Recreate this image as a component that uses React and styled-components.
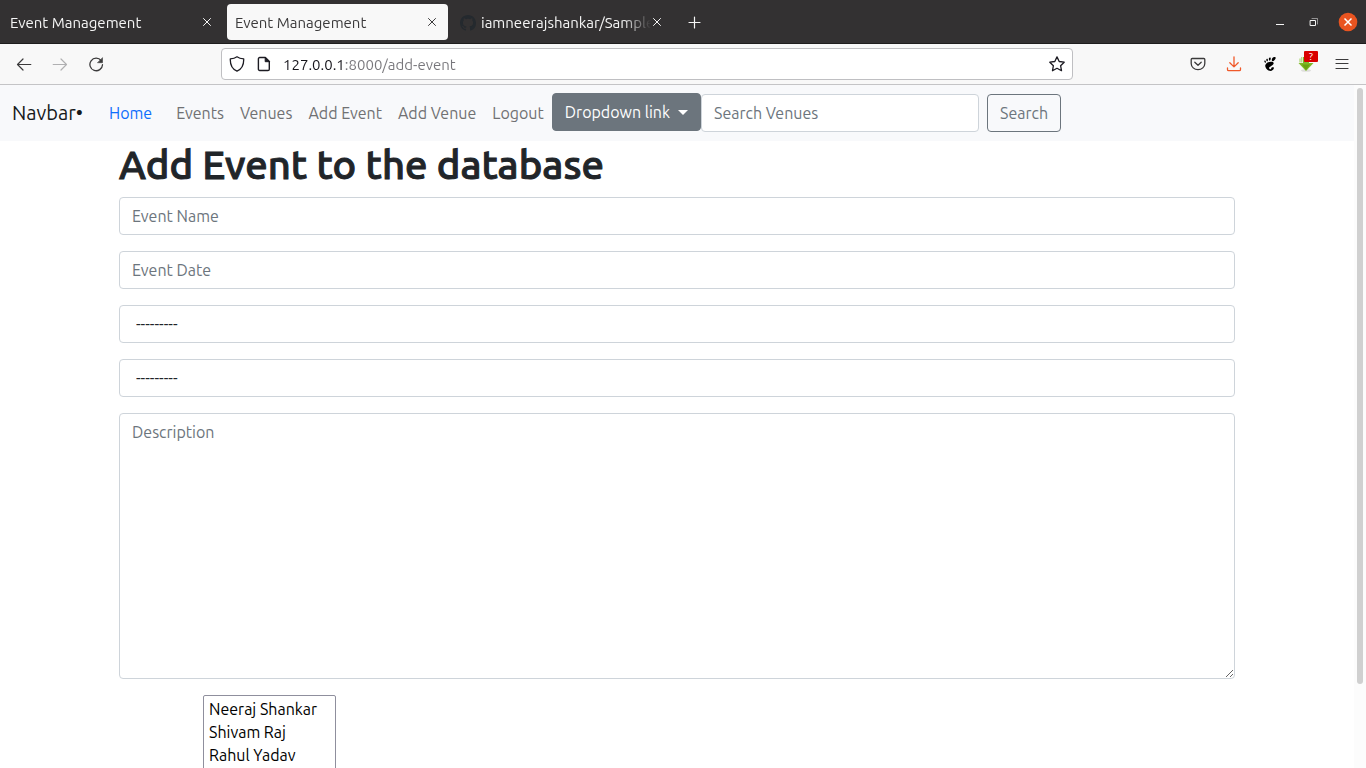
import React from "react";
import styled, { createGlobalStyle, css } from "styled-components";
import { SiGnome } from "react-icons/si";

const GlobalStyle = createGlobalStyle`
  *, *::before, *::after { box-sizing: border-box; }
  html, body { margin: 0; padding: 0; }
  body, button, input, select, textarea {
    font-family: Ubuntu, "Noto Sans", "Open Sans", sans-serif;
  }
`;

const Browser = styled.div`
  display: flex;
  flex-direction: column;
  height: 100vh;
  overflow: hidden;
  background: #fff;
`;

const TabStrip = styled.header`
  display: flex;
  align-items: center;
  flex: none;
  height: 44px;
  padding: 0 8px 0 2px;
  gap: 4px;
  background: #333132;
  border-bottom: 1px solid #1e1d1d;
`;

const Tab = styled.div`
  display: flex;
  align-items: center;
  width: 221px;
  height: 36px;
  padding: 0 10px 0 8px;
  border-radius: 4px;
  color: ${(p) => (p.$active ? "#3b3a3b" : "#f5f5f5")};
  background: ${(p) => (p.$active ? "#f8f8f8" : "transparent")};
`;

const TabTitle = styled.button`
  display: flex;
  align-items: center;
  gap: 5px;
  flex: 1;
  min-width: 0;
  height: 100%;
  padding: 2px 0 0;
  border: 0;
  background: none;
  color: inherit;
  font-size: 15px;
  white-space: nowrap;
  overflow: hidden;
  mask-image: linear-gradient(to left, transparent, #000 28px);
  svg { flex: none; }
`;

const IconButton = styled.button`
  display: flex;
  align-items: center;
  justify-content: center;
  flex: none;
  width: ${(p) => p.$size || 32}px;
  height: ${(p) => p.$size || 32}px;
  padding: 0;
  border: 0;
  background: none;
  color: ${(p) => p.$color || "inherit"};
`;

const WindowControls = styled.div`
  display: flex;
  align-items: center;
  gap: 14px;
  margin-left: auto;
  color: #f5f5f5;
`;

const Toolbar = styled.div`
  display: flex;
  align-items: center;
  flex: none;
  height: 41px;
  padding: 0 8px;
  gap: 4px;
  background: #f8f8f8;
  border-bottom: 1px solid #c4c4c6;
  color: #3b3a3b;
`;

const AddressBar = styled.div`
  display: flex;
  align-items: center;
  flex: 1;
  height: 32px;
  margin: 0 105px;
  padding: 0 7px;
  gap: 11px;
  border: 1px solid #bfbfc2;
  border-radius: 4px;
  background: #fff;
  color: #1c1b22;
`;

const AddressInput = styled.input`
  flex: 1;
  min-width: 0;
  height: 28px;
  padding: 0;
  border: 0;
  outline: 0;
  font-size: 15px;
  color: transparent;
  background: linear-gradient(to right, #15141a 61px, #77767b 61px);
  background-clip: text;
`;

const AddonIcon = styled.span`
  position: relative;
  display: flex;
`;

const AddonBadge = styled.span`
  position: absolute;
  top: -5px;
  left: 6px;
  width: 14px;
  height: 11px;
  border-radius: 1px;
  background: #d90000;
  color: #fff;
  font-size: 10px;
  line-height: 11px;
  text-align: center;
`;

const Viewport = styled.div`
  display: flex;
  flex: 1;
  min-height: 0;
`;

const Page = styled.div`
  flex: 1;
  min-width: 0;
  overflow: hidden;
`;

const ScrollTrack = styled.div`
  flex: none;
  width: 12px;
  padding: 3px;
  background: #fcfcfc;
`;

const ScrollThumb = styled.div`
  height: 88%;
  border-radius: 3px;
  background: #d0d0d0;
`;

const Navbar = styled.nav`
  display: flex;
  align-items: center;
  padding: 8px 12px;
  background: #f8f9fb;
`;

const Brand = styled.a`
  width: 81px;
  margin-right: 8px;
  color: #17191b;
  font-size: 20px;
  line-height: 30px;
  text-decoration: none;
  white-space: nowrap;
`;

const NavLinks = styled.div`
  display: flex;
  align-items: flex-start;
`;

const NavLink = styled.a`
  padding: 8px;
  margin-right: ${(p) => (p.$active ? 8 : 0)}px;
  color: ${(p) => (p.$active ? "#0d6efd" : "#707173")};
  font-size: 16px;
  line-height: 24px;
  text-decoration: none;
  white-space: nowrap;
`;

const buttonBase = css`
  height: 38px;
  padding: 0 12px;
  border: 1px solid #6c757d;
  border-radius: 4px;
  font-size: 16px;
  line-height: 24px;
  white-space: nowrap;
`;

const DropdownButton = styled.button`
  ${buttonBase}
  display: flex;
  align-items: center;
  gap: 8px;
  background: #6c757d;
  color: #fff;
`;

const Caret = styled.span`
  border: 5px solid transparent;
  border-top-color: currentColor;
  border-bottom: 0;
`;

const OutlineButton = styled.button`
  ${buttonBase}
  background: transparent;
  color: #6c757d;
`;

const SearchForm = styled.form`
  display: flex;
  gap: 8px;
`;

const fieldBase = css`
  display: block;
  width: 100%;
  border: 1px solid #ced4da;
  border-radius: 4px;
  background: #fff;
  color: #212529;
  font-size: 16px;
  line-height: 24px;
  &::placeholder { color: #6c757d; opacity: 1; }
`;

const TextField = styled.input`
  ${fieldBase}
  height: 38px;
  padding: 6px 12px;
`;

const SearchField = styled(TextField)`
  width: 278px;
`;

const SelectField = styled.select`
  ${fieldBase}
  appearance: none;
  height: 38px;
  padding: 6px 16px;
`;

const TextArea = styled.textarea`
  ${fieldBase}
  height: 266px;
  padding: 6px 12px;
  resize: vertical;
`;

const Container = styled.main`
  max-width: 1140px;
  margin: 0 auto;
  padding: 0 12px;
`;

const Heading = styled.h1`
  margin: 0 0 8px;
  color: #212529;
  font-size: 40px;
  font-weight: 500;
  line-height: 48px;
  -webkit-text-stroke: 1px #212529;
`;

const EventForm = styled.form`
  display: flex;
  flex-direction: column;
  gap: 16px;
`;

const Attendees = styled.div`
  padding-left: 84px;
`;

const AttendeeList = styled.select`
  width: 133px;
  height: 100px;
  padding: 4px 0;
  border: 1px solid #8f8f9d;
  border-radius: 2px;
  background: #fff;
  color: #000;
  font-size: 16px;
  overflow: hidden;
  option { height: 23px; padding: 0 5px; line-height: 23px; }
`;

function Svg({ size = 16, children, ...rest }) {
  return (
    <svg width={size} height={size} viewBox="0 0 16 16" fill="none" stroke="currentColor"
      strokeLinecap="round" strokeLinejoin="round" aria-hidden="true" {...rest}>
      {children}
    </svg>
  );
}

const CloseIcon = () => (
  <Svg size={12} viewBox="2 2 12 12"><path d="M4.500 4.500l7 7M11.500 4.500l-7 7" /></Svg>
);

const GithubIcon = () => (
  <svg width="16" height="16" viewBox="0 0 16 16" fill="#24292e" aria-hidden="true">
    <path d="M8 0C3.58 0 0 3.58 0 8c0 3.54 2.29 6.53 5.47 7.59.4.07.55-.17.55-.38 0-.19-.01-.82-.01-1.49-2.01.37-2.53-.49-2.69-.94-.09-.23-.48-.94-.82-1.13-.28-.15-.68-.52-.01-.53.63-.01 1.08.58 1.23.82.72 1.21 1.87.87 2.33.66.07-.52.28-.87.51-1.07-1.78-.2-3.64-.89-3.64-3.95 0-.87.31-1.59.82-2.15-.08-.2-.36-1.02.08-2.12 0 0 .67-.21 2.2.82.64-.18 1.32-.27 2-.27s1.36.09 2 .27c1.53-1.04 2.2-.82 2.2-.82.44 1.1.16 1.92.08 2.12.51.56.82 1.27.82 2.15 0 3.07-1.87 3.75-3.65 3.95.29.25.54.73.54 1.48 0 1.07-.01 1.93-.01 2.2 0 .21.15.46.55.38A8.01 8.01 0 0 0 16 8c0-4.42-3.58-8-8-8z" />
  </svg>
);

const tabs = [
  { title: "Event Management" },
  { title: "Event Management", active: true },
  { title: "iamneerajshankar/Sample", icon: <GithubIcon /> },
];

const links = ["Home", "Events", "Venues", "Add Event", "Add Venue", "Logout"];
const people = ["Neeraj Shankar", "Shivam Raj", "Rahul Yadav", ""];

function BrowserTabs() {
  return (
    <TabStrip>
      {tabs.map((tab, i) => (
        <Tab key={i} $active={tab.active}>
          <TabTitle type="button">{tab.icon}<span>{tab.title}</span></TabTitle>
          <IconButton type="button" $size={12} aria-label="Close tab"><CloseIcon /></IconButton>
        </Tab>
      ))}
      <IconButton type="button" $size={34} $color="#f5f5f5" aria-label="New tab">
        <Svg><path d="M8.500 3v11M3 8.500h11" strokeWidth="1.200" /></Svg>
      </IconButton>
      <WindowControls>
        <IconButton type="button" $size={20} aria-label="Minimize">
          <Svg><path d="M4 10.500h8" strokeLinecap="butt" /></Svg>
        </IconButton>
        <IconButton type="button" $size={20} aria-label="Restore">
          <Svg strokeLinejoin="miter">
            <path d="M4.500 6.500h5v5h-5z" />
            <path d="M6 4.500h5.500v5.500" opacity=".5" />
          </Svg>
        </IconButton>
        <IconButton type="button" $size={20} aria-label="Close window">
          <svg width="20" height="20" viewBox="0 0 20 20" aria-hidden="true">
            <circle cx="10" cy="10" r="9.300" fill="#e95420" />
            <path d="M6.500 6.500l7 7M13.500 6.500l-7 7" stroke="#fff" strokeWidth="1.500" />
          </svg>
        </IconButton>
      </WindowControls>
    </TabStrip>
  );
}

function BrowserToolbar() {
  return (
    <Toolbar>
      <IconButton type="button" aria-label="Back">
        <Svg><path d="M14.800 8.500H1.500M7 3L1.500 8.500 7 14" strokeWidth="1.200" /></Svg>
      </IconButton>
      <IconButton type="button" $color="#b0b0b2" aria-label="Forward">
        <Svg><path d="M1.200 8.500h13.300M9 3l5.500 5.500L9 14" strokeWidth="1.200" /></Svg>
      </IconButton>
      <IconButton type="button" aria-label="Reload">
        <Svg>
          <path d="M13.200 4.600A6.300 6.300 0 1 0 14.500 8.700" strokeWidth="1.300" />
          <path d="M14.500 2v4.700H9.800z" fill="currentColor" strokeWidth=".6" />
        </Svg>
      </IconButton>
      <AddressBar>
        <Svg>
          <path d="M8 .8c1.700 1.300 4.300 2 6.700 2.100.2 5-1.700 10.200-6.700 12.300C3 13.100 1.100 7.900 1.300 2.900 3.700 2.800 6.300 2.100 8 .8z" strokeWidth="1.300" />
        </Svg>
        <Svg>
          <path d="M3.700 1.500h5.600l4 4v7.700a1.300 1.300 0 0 1-1.300 1.300H3.700a1.300 1.300 0 0 1-1.300-1.300V2.800a1.300 1.300 0 0 1 1.300-1.300z" strokeWidth="1.400" />
          <path d="M9.200 1.500v4.200h4.200z" fill="currentColor" />
        </Svg>
        <AddressInput aria-label="Address" defaultValue="127.0.0.1:8000/add-event" />
        <Svg>
          <path d="M8 .9l2.200 4.600 5 .7-3.600 3.500.9 5L8 12.300l-4.500 2.400.9-5L.8 6.200l5-.7z" strokeWidth="1.300" />
        </Svg>
      </AddressBar>
      <IconButton type="button" aria-label="Save to Pocket">
        <Svg>
          <path d="M2.200 2.500h11.600c.6 0 1 .4 1 1v3.900a6.800 6.300 0 0 1-13.600 0V3.500c0-.6.400-1 1-1z" strokeWidth="1.300" />
          <path d="M4.800 6.300L8 9.300l3.200-3" strokeWidth="1.300" />
        </Svg>
      </IconButton>
      <IconButton type="button" $color="#f0592a" aria-label="Downloads">
        <Svg>
          <path d="M8 .8v10M3.800 6.700L8 10.900l4.200-4.200M1.500 12v1.500c0 .7.500 1.200 1.200 1.200h10.600c.7 0 1.200-.5 1.200-1.200V12" strokeWidth="1.300" />
        </Svg>
      </IconButton>
      <IconButton type="button" $color="#000" aria-label="GNOME extension">
        <SiGnome size={14} />
      </IconButton>
      <IconButton type="button" aria-label="Download helper">
        <AddonIcon>
          <svg width="16" height="16" viewBox="0 0 16 16" aria-hidden="true">
            <ellipse cx="8" cy="14.500" rx="5" ry="1.300" fill="#dededc" />
            <path d="M5 1h6v6h4.500L8 15 .5 7H5z" fill="#7db928" />
            <path d="M1.500 2.500h1v4h-1zM3.300 1h1v5.500h-1z" fill="#9ccc5a" />
            <path d="M4 8.500h8L8 14z" fill="#6aa312" />
          </svg>
          <AddonBadge>?</AddonBadge>
        </AddonIcon>
      </IconButton>
      <IconButton type="button" aria-label="Menu">
        <Svg><path d="M2 3.500h12M2 7.500h12M2 12.500h12" strokeWidth="1.200" /></Svg>
      </IconButton>
    </Toolbar>
  );
}

function SiteNav() {
  return (
    <Navbar>
      <Brand href="#">Navbar•</Brand>
      <NavLinks>
        {links.map((label, i) => (
          <NavLink key={label} href="#" $active={i === 0}>{label}</NavLink>
        ))}
        <DropdownButton type="button">Dropdown link<Caret /></DropdownButton>
      </NavLinks>
      <SearchForm>
        <SearchField type="search" placeholder="Search Venues" aria-label="Search Venues" />
        <OutlineButton type="button">Search</OutlineButton>
      </SearchForm>
    </Navbar>
  );
}

export default function App() {
  return (
    <Browser>
      <GlobalStyle />
      <BrowserTabs />
      <BrowserToolbar />
      <Viewport>
        <Page>
          <SiteNav />
          <Container>
            <Heading>Add Event to the database</Heading>
            <EventForm>
              <TextField placeholder="Event Name" aria-label="Event Name" />
              <TextField placeholder="Event Date" aria-label="Event Date" />
              <SelectField aria-label="Venue"><option>---------</option></SelectField>
              <SelectField aria-label="Manager"><option>---------</option></SelectField>
              <TextArea placeholder="Description" aria-label="Description" />
              <Attendees>
                <AttendeeList multiple aria-label="Attendees">
                  {people.map((name) => <option key={name}>{name}</option>)}
                </AttendeeList>
              </Attendees>
            </EventForm>
          </Container>
        </Page>
        <ScrollTrack><ScrollThumb /></ScrollTrack>
      </Viewport>
    </Browser>
  );
}
